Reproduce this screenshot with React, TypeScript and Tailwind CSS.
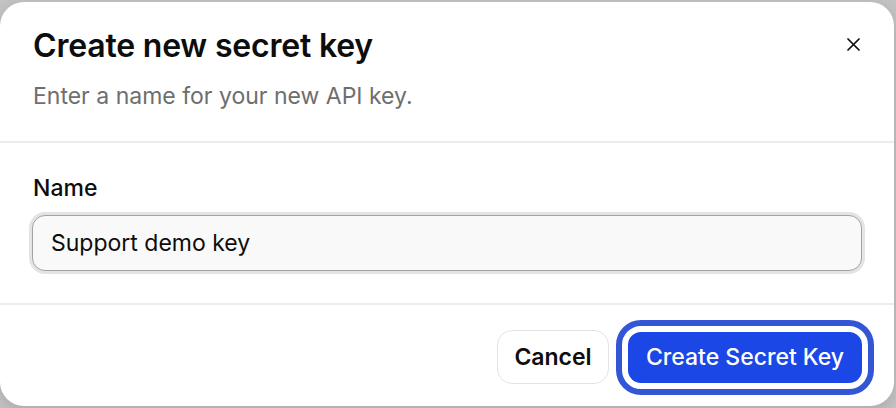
import React from "react";

export default function App() {
  return (
    <div
      className="relative w-[896px] h-[408px] overflow-hidden bg-[#c4c4c4]"
      style={{ fontFamily: "Inter, 'Liberation Sans', sans-serif" }}
    >
      <div className="relative mt-[2px] w-[894px] h-[404px] rounded-[24px] bg-white shadow-[0_4px_16px_rgba(0,0,0,0.15)] flex flex-col">
        <div className="relative px-[33px] pt-[25px] pb-[30px] border-b-2 border-[#ececec]">
          <h1 className="text-[32px] leading-[38px] font-semibold tracking-[-0.2px] text-[#0d0d0d]">Create new secret key</h1>
          <p className="mt-[16px] text-[23px] leading-[30px] text-[#6e6e6e]">Enter a name for your new API key.</p>
          <button className="absolute right-[34px] top-[35px] w-[14px] h-[14px] flex items-center justify-center text-[#0d0d0d]">
            <svg width="13" height="13" viewBox="0 0 13 13" fill="none" stroke="currentColor" strokeWidth="1.7" strokeLinecap="round">
              <path d="M1 1L12 12M12 1L1 12" />
            </svg>
          </button>
        </div>
        <div className="px-[32px] pt-[30px] pb-[32px] border-b-2 border-[#ececec]">
          <label className="block pl-[1px] text-[23px] leading-[30px] font-medium text-[#0d0d0d]">Name</label>
          <div className="mt-[12px] h-[56px] rounded-[13px] border border-[#a3a3a3] bg-[#f9f9f9] shadow-[0_0_0_3px_#e4e4e4] flex items-center px-[18px] text-[23px] text-[#0d0d0d]">
            Support demo key
          </div>
        </div>
        <div className="flex items-center justify-end gap-[19px] pr-[32px] pt-[25px] pb-[23px]">
          <button className="h-[54px] w-[112px] rounded-[15px] border border-[#e3e3e3] bg-white text-[23px] font-semibold text-[#0d0d0d]">
            Cancel
          </button>
          <button className="h-[51px] w-[234px] rounded-[13px] bg-[#1a47e6] text-[23px] font-medium text-white outline-[6px] outline-solid outline-[#3256d6] outline-offset-[6px]">
            Create Secret Key
          </button>
        </div>
      </div>
    </div>
  );
}
